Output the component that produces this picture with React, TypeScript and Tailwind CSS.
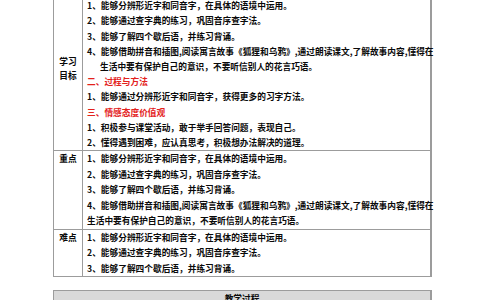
import React from "react";

const red = "text-[#e3211c]";

function Line({ children, className = "" }: { children: React.ReactNode; className?: string }) {
  return <div className={"whitespace-nowrap " + className}>{children}</div>;
}

export default function App() {
  const font = { fontFamily: '"Noto Sans CJK SC", "Noto Sans", sans-serif' };
  return (
    <div className="w-[484px] h-[300px] overflow-hidden bg-white text-[8.7px] font-bold text-[#0a0a0a]" style={font}>
      <div className="ml-[53px] w-[379px] mt-[-17px] border-l border-b border-r-2 border-[#9c9c9c]">
        <div className="grid grid-cols-[29px_1fr]">
          <div className="border-r border-[#9c9c9c] flex flex-col items-center justify-center leading-[14px] pt-[4px]">
            <div>学习</div>
            <div>目标</div>
          </div>
          <div className="pl-[4px] leading-[15.2px]">
            <Line className={red}>一、知识与技能</Line>
            <Line>1、能够分辨形近字和同音字，在具体的语境中运用。</Line>
            <Line>2、能够通过查字典的练习，巩固音序查字法。</Line>
            <Line>3、能够了解四个歇后语，并练习背诵。</Line>
            <Line>4、能够借助拼音和插图,阅读寓言故事《狐狸和乌鸦》,通过朗读课文,了解故事内容,懂得在</Line>
            <Line className="pl-[13px]">生活中要有保护自己的意识，不要听信别人的花言巧语。</Line>
            <Line className={red}>二、过程与方法</Line>
            <Line>1、能够通过分辨形近字和同音字，获得更多的习字方法。</Line>
            <Line className={red}>三、情感态度价值观</Line>
            <Line>1、积极参与课堂活动，敢于举手回答问题，表现自己。</Line>
            <Line>2、懂得遇到困难，应认真思考，积极想办法解决的道理。</Line>
          </div>
        </div>
        <div className="grid grid-cols-[29px_1fr] border-t border-[#9c9c9c]">
          <div className="border-r border-[#9c9c9c] text-center leading-[15.5px]">重点</div>
          <div className="pl-[4px] leading-[15.5px]">
            <Line>1、能够分辨形近字和同音字，在具体的语境中运用。</Line>
            <Line>2、能够通过查字典的练习，巩固音序查字法。</Line>
            <Line>3、能够了解四个歇后语，并练习背诵。</Line>
            <Line>4、能够借助拼音和插图,阅读寓言故事《狐狸和乌鸦》,通过朗读课文,了解故事内容,懂得在</Line>
            <Line>生活中要有保护自己的意识，不要听信别人的花言巧语。</Line>
          </div>
        </div>
        <div className="grid grid-cols-[29px_1fr] border-t border-[#9c9c9c]">
          <div className="border-r border-[#9c9c9c] text-center leading-[15.5px]">难点</div>
          <div className="pl-[4px] leading-[15.5px]">
            <Line>1、能够分辨形近字和同音字，在具体的语境中运用。</Line>
            <Line>2、能够通过查字典的练习，巩固音序查字法。</Line>
            <Line>3、能够了解四个歇后语，并练习背诵。</Line>
          </div>
        </div>
      </div>
      <div className="ml-[53px] w-[379px] mt-[13px] border border-r-2 border-[#9c9c9c] bg-[#d9d9d9] text-center leading-[14px] pt-[1px] h-[30px]">
        教学过程
      </div>
    </div>
  );
}
